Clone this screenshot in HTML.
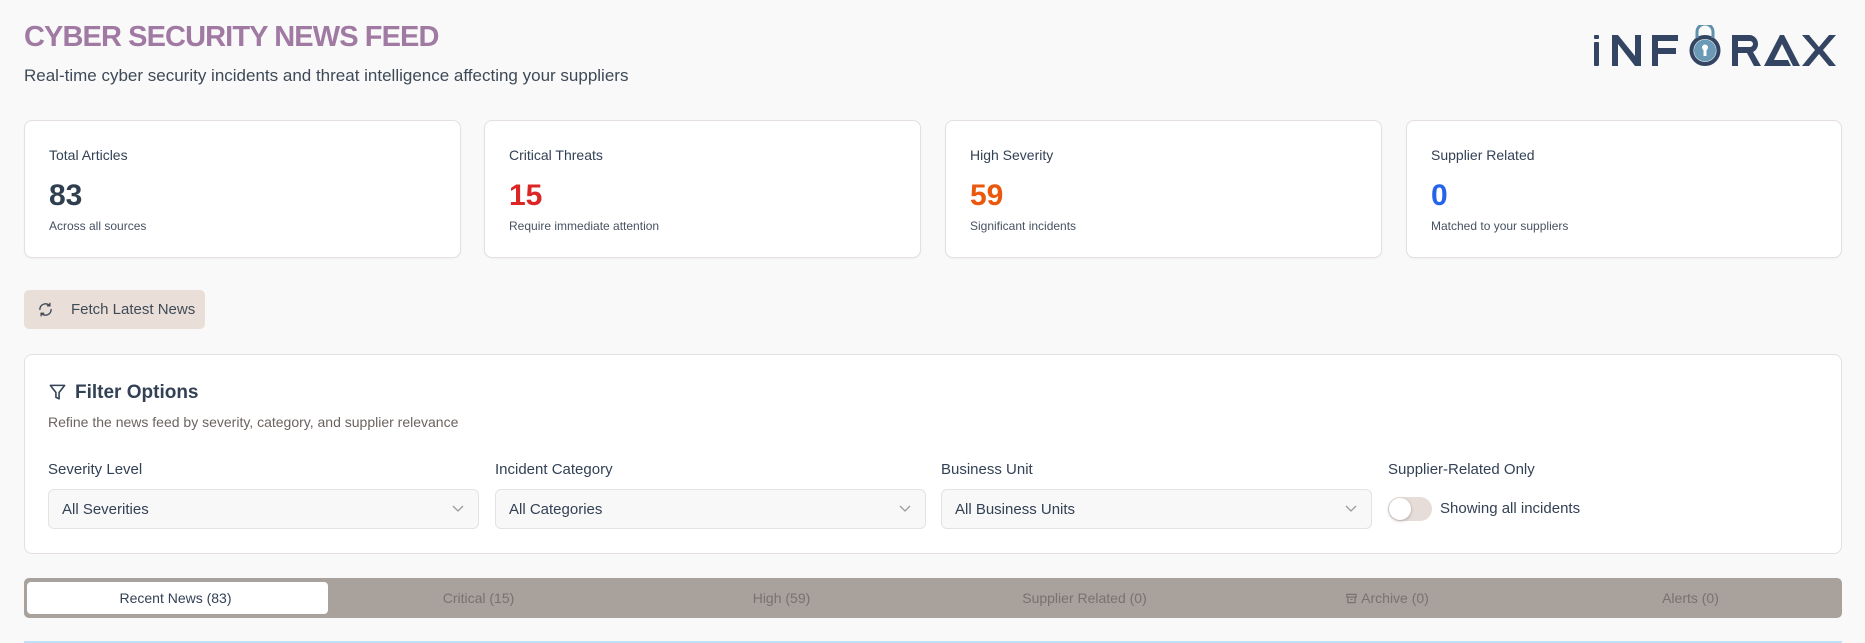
<!DOCTYPE html>
<html><head><meta charset="utf-8"><style>
*{box-sizing:border-box;margin:0;padding:0}
body{width:1865px;height:643px;overflow:hidden;background:#f9f9f9;font-family:"Liberation Sans",sans-serif;color:#334155;position:relative}
.abs{position:absolute}
h1{position:absolute;left:24px;top:21px;font-size:29px;font-weight:bold;color:#a07aa3;letter-spacing:-0.9px;white-space:nowrap}
.sub{left:24px;top:66px;font-size:17px;color:#3f4a57}
.card{position:absolute;top:120px;width:437px;height:138px;background:#fff;border:1px solid #e5dfdf;border-radius:8px;box-shadow:0 1px 2px rgba(0,0,0,.04)}
.card .l{position:absolute;left:24px;top:26px;font-size:14px;color:#334155}
.card .n{position:absolute;left:24px;top:58px;font-size:30px;font-weight:bold}
.card .s{position:absolute;left:24px;top:98px;font-size:12px;color:#475262}
.btn{left:24px;top:290px;width:181px;height:39px;background:#eadfd8;border-radius:5px;font-size:15px;color:#3f4a57}
.panel{left:24px;top:354px;width:1818px;height:200px;background:#fff;border:1px solid #e5dfdf;border-radius:8px}
.lab{position:absolute;top:461px;font-size:15px;color:#334155}
.sel{position:absolute;top:489px;height:40px;border:1px solid #e5e2e2;border-radius:6px;background:#f8f8f8;font-size:15px;color:#334155;padding:11px 0 0 13px}
.sel svg{position:absolute;right:14px;top:15px}
.tabs{left:24px;top:578px;width:1818px;height:40px;background:#a8a19c;border-radius:5px}
.tab{position:absolute;top:0;height:40px;line-height:40px;text-align:center;font-size:14px;color:#787270;width:303px}
</style></head><body>
<h1>CYBER SECURITY NEWS FEED</h1>
<div class="abs sub">Real-time cyber security incidents and threat intelligence affecting your suppliers</div>
<div class="abs" style="left:1594px;top:25px;width:246px;height:46px">
<svg width="246" height="46" viewBox="0 0 246 46">
<g fill="#344563">
<rect x="0" y="10" width="5" height="4" rx="1"/><rect x="0" y="17" width="5" height="24" rx="1"/>
<path d="M18 41V10h6l17 21V10h6v31h-6L24 19v22z"/>
<path d="M58 10h26v6H64v7h18v6H64v12h-6z"/>
<path d="M138 41V10h18a9 9 0 0 1 3 17l8 14h-7l-7-13h-9v13zM144 16v6h12a3 3 0 0 0 0-6z"/>
<path d="M170 41l16-31h4l16 31h-7l-11-22-8 16h14l3 6z"/>
<path d="M208 10h7l10 12 10-12h7l-13 15 13 16h-7l-10-12-10 12h-7l13-16z"/>
</g>
<circle cx="111" cy="25.5" r="13.5" fill="none" stroke="#344563" stroke-width="4"/>
<path d="M103 13V7a8 8 0 0 1 16 0v6" fill="none" stroke="#5f91ad" stroke-width="3"/>
<circle cx="111" cy="25.5" r="11" fill="#6a9ab5"/>
<circle cx="111" cy="22.5" r="3" fill="#fff"/><rect x="109.5" y="23" width="3" height="8" fill="#fff"/>
</svg></div>

<div class="card" style="left:24px"><div class="l">Total Articles</div><div class="n" style="color:#2f3f4f">83</div><div class="s">Across all sources</div></div>
<div class="card" style="left:484px"><div class="l">Critical Threats</div><div class="n" style="color:#dc2626">15</div><div class="s">Require immediate attention</div></div>
<div class="card" style="left:945px"><div class="l">High Severity</div><div class="n" style="color:#ea580c">59</div><div class="s">Significant incidents</div></div>
<div class="card" style="left:1406px;width:436px"><div class="l">Supplier Related</div><div class="n" style="color:#2563eb">0</div><div class="s">Matched to your suppliers</div></div>

<div class="abs btn">
<svg class="abs" style="left:14px;top:12px" width="15" height="15" viewBox="0 0 24 24" fill="none" stroke="#3f4a57" stroke-width="2.2" stroke-linecap="round"><path d="M21 12a9 9 0 0 1-15.5 6.2M3 12A9 9 0 0 1 18.5 5.8"/><path d="M19 2v4h-4M5 22v-4h4"/></svg>
<span class="abs" style="left:47px;top:11px">Fetch Latest News</span></div>

<div class="abs panel"></div>
<svg class="abs" style="left:48px;top:383px" width="19" height="19" viewBox="0 0 24 24" fill="none" stroke="#334155" stroke-width="2" stroke-linejoin="round"><path d="M3 3h18l-7 9v8l-4-2v-6z"/></svg>
<div class="abs" style="left:75px;top:382px;font-size:19px;font-weight:bold;color:#334155">Filter Options</div>
<div class="abs" style="left:48px;top:414px;font-size:14px;color:#6b6360">Refine the news feed by severity, category, and supplier relevance</div>

<div class="lab" style="left:48px">Severity Level</div>
<div class="lab" style="left:495px">Incident Category</div>
<div class="lab" style="left:941px">Business Unit</div>
<div class="lab" style="left:1388px">Supplier-Related Only</div>
<div class="sel" style="left:48px;width:431px">All Severities<svg width="12" height="8" viewBox="0 0 12 8"><path d="M1 1l5 5 5-5" fill="none" stroke="#9a9a9a" stroke-width="1.3"/></svg></div>
<div class="sel" style="left:495px;width:431px">All Categories<svg width="12" height="8" viewBox="0 0 12 8"><path d="M1 1l5 5 5-5" fill="none" stroke="#9a9a9a" stroke-width="1.3"/></svg></div>
<div class="sel" style="left:941px;width:431px">All Business Units<svg width="12" height="8" viewBox="0 0 12 8"><path d="M1 1l5 5 5-5" fill="none" stroke="#9a9a9a" stroke-width="1.3"/></svg></div>
<div class="abs" style="left:1388px;top:497px;width:44px;height:24px;border-radius:12px;background:#e6dcd8"></div>
<div class="abs" style="left:1389px;top:498px;width:22px;height:22px;border-radius:11px;background:#fff;box-shadow:0 1px 3px rgba(0,0,0,.25)"></div>
<div class="abs" style="left:1440px;top:500px;font-size:15px;color:#334155">Showing all incidents</div>

<div class="abs tabs">
<div class="abs" style="left:3px;top:4px;width:301px;height:32px;background:#fff;border-radius:4px"></div>
<div class="tab" style="left:0;color:#334155">Recent News (83)</div>
<div class="tab" style="left:303px">Critical (15)</div>
<div class="tab" style="left:606px">High (59)</div>
<div class="tab" style="left:909px">Supplier Related (0)</div>
<div class="tab" style="left:1212px"><svg width="11" height="11" viewBox="0 0 12 12" style="vertical-align:-1px;margin-right:4px" fill="none" stroke="#787270" stroke-width="1.3"><rect x="1" y="1.5" width="10" height="3"/><path d="M2 4.5v6h8v-6M5 7h2"/></svg>Archive (0)</div>
<div class="tab" style="left:1515px">Alerts (0)</div>
</div>
<div class="abs" style="left:24px;top:641px;width:1818px;height:2px;background:#bfe0f7"></div>
</body></html>
